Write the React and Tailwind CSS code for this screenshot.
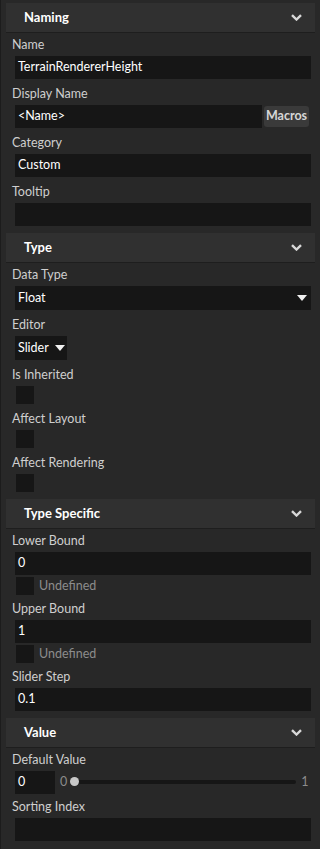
import React from "react";

function Chevron() {
  return (
    <svg width="11" height="7" viewBox="0 0 11 7" className="text-[#d8d8d8]">
      <path d="M1 1.2 L5.5 5.5 L10 1.2" fill="none" stroke="currentColor" strokeWidth="2.4" />
    </svg>
  );
}

function Caret() {
  return (
    <svg width="10" height="6" viewBox="0 0 10 6">
      <path d="M0 0 H10 L5 6 Z" fill="#f0f0f0" />
    </svg>
  );
}

function Header({title}) {
  return (
    <div className="mx-[5px] mt-[3px] h-[30px] flex items-center justify-between bg-[#303030] border-b border-[#1e1e1e] pl-[18px] pr-[13px]">
      <span className="text-[13px] font-bold text-white">{title}</span>
      <Chevron />
    </div>
  );
}

function Label({children}) {
  return <div className="h-[22px] pl-[11px] flex items-center text-[12.5px] text-[#cfcfcf]">{children}</div>;
}

function Input({value, className = ""}) {
  return (
    <div className={"ml-[14px] h-[23px] bg-[#161616] flex items-center px-[3px] text-[12.5px] text-white " + className}>
      {value}
    </div>
  );
}

function Field({label, value}) {
  return (
    <div className="pb-[4px]">
      <Label>{label}</Label>
      <Input value={value} className="w-[296px]" />
    </div>
  );
}

function Check({label}) {
  return (
    <div className="flex items-center gap-[5px] ml-[15px] h-[18px]">
      <div className="w-[18px] h-[18px] bg-[#161616]" />
      {label && <span className="text-[12.5px] text-[#8c8c8c]">{label}</span>}
    </div>
  );
}

export default function App() {
  return (
    <div className="w-[320px] h-[849px] overflow-hidden bg-[#282828] border-l border-[#1c1c1c]" style={{fontFamily: "Lato, 'Noto Sans', sans-serif"}}>
      <Header title="Naming" />
      <div className="pt-[1px]">
        <Field label="Name" value="TerrainRendererHeight" />
        <div className="pb-[4px]">
          <Label>Display Name</Label>
          <div className="flex items-center">
            <Input value="<Name>" className="w-[247px]" />
            <button className="ml-[2px] w-[45px] h-[21px] rounded-[3px] bg-[#3a3a3a] text-[12.5px] font-bold text-[#d6d6d6]">Macros</button>
          </div>
        </div>
        <Field label="Category" value="Custom" />
        <Field label="Tooltip" value="" />
      </div>

      <Header title="Type" />
      <div className="pt-[1px]">
        <div className="pb-[4px]">
          <Label>Data Type</Label>
          <div className="ml-[14px] w-[296px] h-[24px] bg-[#161616] flex items-center justify-between pl-[3px] pr-[4px] text-[12.5px] text-white">
            <span>Float</span>
            <Caret />
          </div>
        </div>
        <div className="pb-[4px]">
          <Label>Editor</Label>
          <div className="ml-[14px] w-[52px] h-[24px] bg-[#161616] flex items-center gap-[6px] pl-[3px] text-[12.5px] text-white">
            <span>Slider</span>
            <Caret />
          </div>
        </div>
        <div className="pb-[4px]">
          <Label>Is Inherited</Label>
          <Check />
        </div>
        <div className="pb-[4px]">
          <Label>Affect Layout</Label>
          <Check />
        </div>
        <div className="pb-[4px]">
          <Label>Affect Rendering</Label>
          <Check />
        </div>
      </div>

      <Header title="Type Specific" />
      <div className="pt-[1px]">
        <div className="pb-[3px]">
          <Label>Lower Bound</Label>
          <Input value="0" className="w-[296px]" />
          <div className="mt-[2px]"><Check label="Undefined" /></div>
        </div>
        <div className="pb-[3px]">
          <Label>Upper Bound</Label>
          <Input value="1" className="w-[296px]" />
          <div className="mt-[2px]"><Check label="Undefined" /></div>
        </div>
        <Field label="Slider Step" value="0.1" />
      </div>

      <Header title="Value" />
      <div className="pt-[1px]">
        <div className="pb-[3px]">
          <Label>Default Value</Label>
          <div className="flex items-center h-[22px]">
            <Input value="0" className="w-[40px] h-[22px]" />
            <span className="ml-[5px] text-[12.5px] text-[#8c8c8c]">0</span>
            <div className="relative ml-[7px] w-[222px] h-[4px] rounded-full bg-[#161616]">
              <div className="absolute left-[-4px] top-[-3px] w-[9px] h-[9px] rounded-full bg-[#c8c8c8]" />
            </div>
            <span className="ml-[5px] text-[12.5px] text-[#8c8c8c]">1</span>
          </div>
        </div>
        <Field label="Sorting Index" value="" />
      </div>
    </div>
  );
}
